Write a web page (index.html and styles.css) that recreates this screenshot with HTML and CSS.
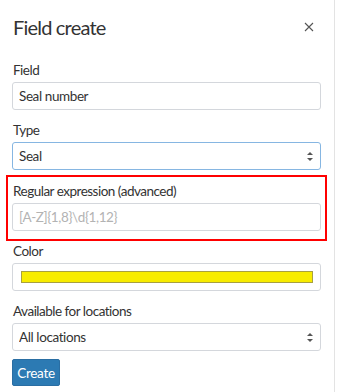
FILE: index.html
```html
<!DOCTYPE html>
<html lang="en">
<head>
  <meta charset="UTF-8" />
  <title>Field create</title>
  <link rel="stylesheet" href="styles.css">
</head>
<body>
  <div class="panel">
    <div class="panel-head">
      <h1>Field create</h1>
      <button class="close" type="button" aria-label="Close">
        <svg width="10" height="10" viewBox="0 0 10 10"><path d="M1 1L9 9M9 1L1 9" stroke="#555" stroke-width="1.1" fill="none"/></svg>
      </button>
    </div>

    <form>
      <div class="group">
        <label for="field">Field</label>
        <input id="field" type="text" value="Seal number">
      </div>

      <div class="group">
        <label for="type">Type</label>
        <div class="select-wrap">
          <select id="type" class="focused"><option>Seal</option></select>
          <span class="arrows"></span>
        </div>
      </div>

      <div class="group highlight">
        <label for="regex">Regular expression (advanced)</label>
        <input id="regex" type="text" placeholder="[A-Z]{1,8}\d{1,12}">
      </div>

      <div class="group">
        <label>Color</label>
        <div class="color-box"><span class="swatch"></span></div>
      </div>

      <div class="group">
        <label for="locations">Available for locations</label>
        <div class="select-wrap">
          <select id="locations"><option>All locations</option></select>
          <span class="arrows"></span>
        </div>
      </div>

      <button type="button" class="btn-create">Create</button>
    </form>
  </div>
</body>
</html>
```

FILE: styles.css
```css
*, *::before, *::after { box-sizing: border-box; }
* {
  margin: 0;
  padding: 0;
  font-family: "Lato", "Open Sans", sans-serif;
}

body { background: white; color: #333; }

.panel {
  width: 335px;
  height: 392px;
  border-right: 1px solid #e3e3e3;
  padding: 0 13px 0 12px;
}

.panel-head {
  display: flex;
  justify-content: space-between;
  align-items: center;
  height: 60px;
  padding-bottom: 6px;
}

.panel-head h1 {
  font-size: 20px;
  font-weight: normal;
  letter-spacing: -0.8px;
  color: #333;
  padding-left: 1px;
}

.close {
  border: none;
  background: none;
  width: 10px;
  height: 10px;
  margin-right: 7px;
  display: flex;
}

.group { margin-bottom: 10px; }

.group label {
  display: block;
  font-size: 13.5px;
  letter-spacing: -0.5px;
  line-height: 20px;
  margin-bottom: 2px;
  padding-left: 1px;
  color: #333;
}

.group input,
.group select {
  width: 100%;
  height: 28px;
  border: 1px solid #d4d7dc;
  border-radius: 3px;
  padding: 0 6px;
  font-size: 13.5px;
  letter-spacing: -0.4px;
  color: #333;
  background: white;
  outline: none;
}

.group input::placeholder { color: #b3b3b3; }

.select-wrap { position: relative; }

.select-wrap select { appearance: none; -webkit-appearance: none; }

.select-wrap select.focused { border-color: #86b6e2; }

.arrows {
  position: absolute;
  right: 7px;
  top: 10px;
  width: 7px;
  height: 9px;
}
.arrows::before,
.arrows::after {
  content: "";
  position: absolute;
  left: 0;
  border-left: 3.5px solid transparent;
  border-right: 3.5px solid transparent;
}
.arrows::before { top: 0; border-bottom: 3.5px solid #555; }
.arrows::after { bottom: 0; border-top: 3.5px solid #555; }

.highlight {
  border: 2px solid #f00;
  margin: -5px -6px 0 -6px;
  padding: 4px 4px 8px 4px;
}

.color-box {
  height: 28px;
  border: 1px solid #d4d7dc;
  border-radius: 3px;
  padding: 7px 7px 7px 8px;
}

.swatch {
  display: block;
  height: 12px;
  background: #f8ec00;
  border: 1px solid #a8a040;
}

.btn-create {
  margin-top: -2px;
  background: #2c7ab3;
  color: white;
  border: 1px solid #2a6ea3;
  border-radius: 2px;
  font-size: 13.5px;
  letter-spacing: -0.3px;
  height: 27px;
  width: 48px;
}
```
